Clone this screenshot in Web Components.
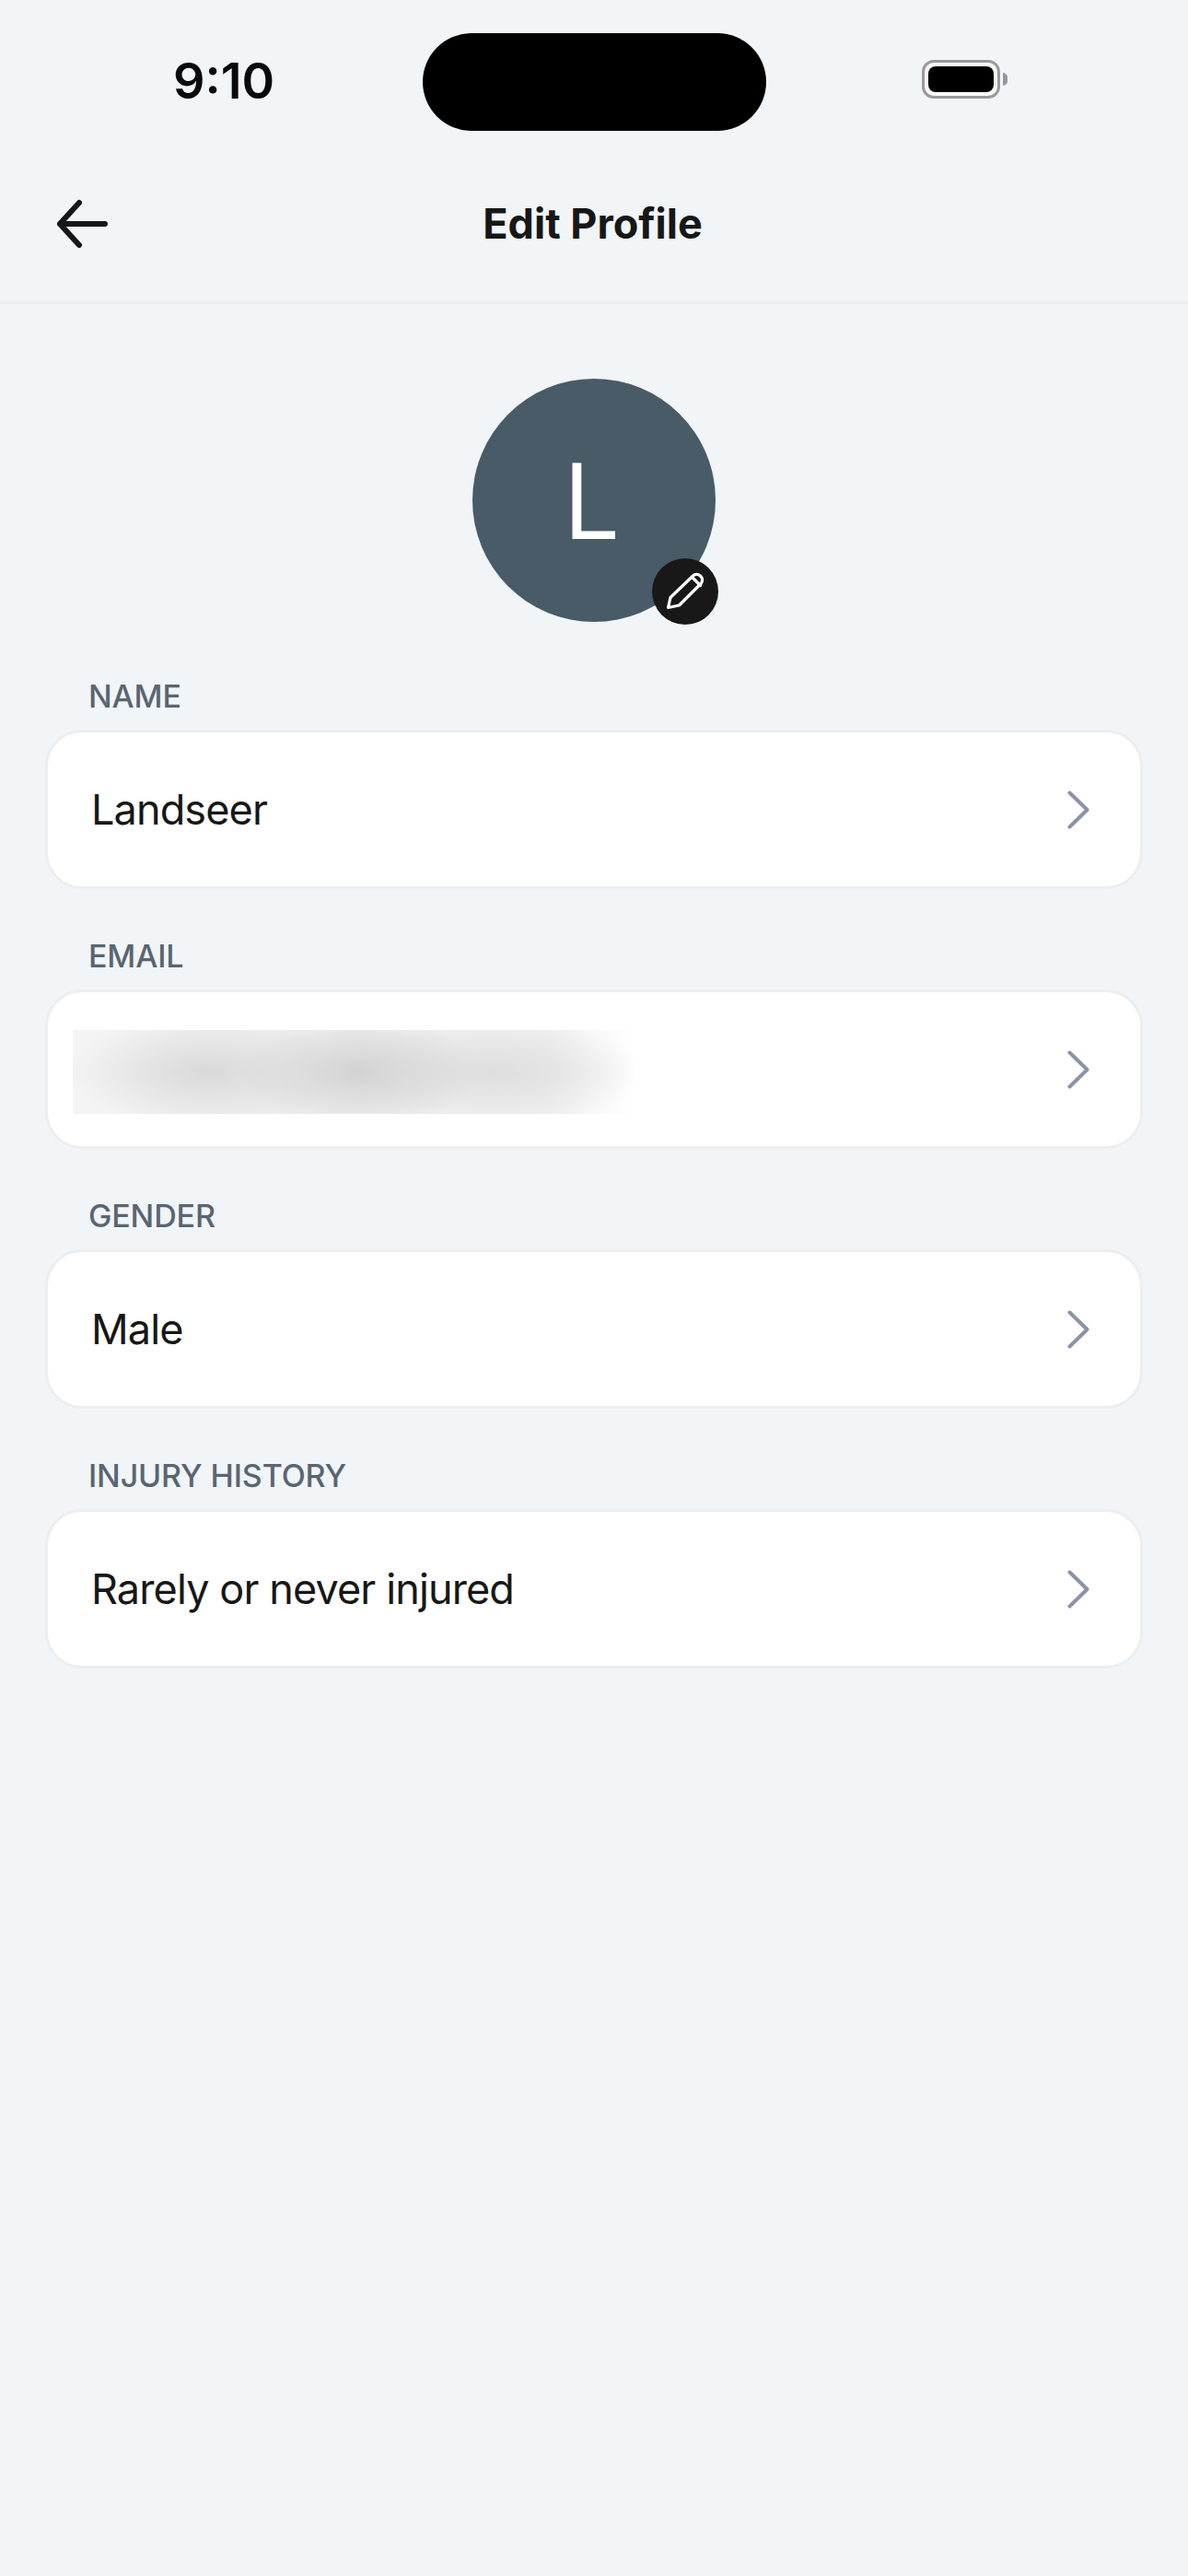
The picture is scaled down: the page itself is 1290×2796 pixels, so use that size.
<!DOCTYPE html>
<html lang="en"><head><meta charset="utf-8"><title>Edit Profile</title>
<style>
html,body{margin:0;padding:0;background:#f1f5f8;}
body{font-family:Inter,"Liberation Sans",sans-serif;color:#171717;min-height:2796px;}
main-page{display:block}
</style></head><body>
<main-page>
  <status-bar time="9:10"></status-bar>
  <nav-header>Edit Profile</nav-header>
  <profile-avatar initial="L"></profile-avatar>
  <field-list>
    <profile-field label="NAME">Landseer</profile-field>
    <profile-field label="EMAIL"><redacted-text></redacted-text></profile-field>
    <profile-field label="GENDER">Male</profile-field>
    <profile-field label="INJURY HISTORY">Rarely or never injured</profile-field>
  </field-list>
</main-page>
<script>
function def(name,html){
  customElements.define(name,class extends HTMLElement{
    connectedCallback(){
      if(this.shadowRoot)return;
      const r=this.attachShadow({mode:'open'});
      r.innerHTML=typeof html==='function'?html(this):html;
    }
  });
}
def('status-bar',h=>`<style>
:host{display:grid;grid-template-columns:1fr 373px 1fr;height:158px;padding-top:36px;box-sizing:border-box;align-items:start}
.time{font:600 54px/1 Inter,sans-serif;color:#0a0a0a;justify-self:start;margin:25px 0 0 188px}
.island{height:106px;border-radius:53px;background:#000}
.bat{justify-self:start;margin:29px 0 0 169px;display:flex;align-items:center;gap:3px}
.body{box-sizing:border-box;width:85px;height:42px;border:3px solid #9a9a9c;border-radius:13px;padding:4px;background:#f7f9fb}
.fill{height:100%;background:#000;border-radius:8px}
.cap{width:5px;height:14px;background:#98989a;border-radius:0 7px 7px 0}
</style><div class="time">${h.getAttribute('time')}</div><div class="island"></div>
<div class="bat"><div class="body"><div class="fill"></div></div><div class="cap"></div></div>`);
def('nav-header',`<style>
:host{display:grid;grid-template-columns:1fr auto 1fr;align-items:center;height:172px;box-sizing:border-box;border-bottom:3px solid #eceef0}
svg{display:block;margin-left:56px}
.t{font:700 45px/1 Inter,sans-serif;color:#171717;margin-right:3px}
</style><svg width="64" height="56" viewBox="0 0 64 56" fill="none" stroke="#171717" stroke-width="6" stroke-linecap="round" stroke-linejoin="round"><path d="M58 28H9M30 5 9 28l21 23"/></svg><div class="t"><slot></slot></div><div></div>`);
def('profile-avatar',h=>`<style>
:host{display:flex;justify-content:center;padding-top:81px}
.a{position:relative;box-sizing:border-box;width:264px;height:264px;padding:0 9px 7px 0;border-radius:50%;background:#485b67;color:#fff;display:flex;align-items:center;justify-content:center;font:400 116px/1 "Open Sans",sans-serif}
.b{position:absolute;left:195px;top:195px;width:72px;height:72px;border-radius:50%;background:#181818}
svg{display:block}
</style><div class="a">${h.getAttribute('initial')}<div class="b"><svg width="72" height="72" viewBox="0 0 72 72" fill="none" stroke="#fff" stroke-width="3.2" stroke-linejoin="round" stroke-linecap="round"><path d="M17.500 53.500l2.500-11L44.500 19a5.500 5.500 0 0 1 7.800 0l.7.700a5.500 5.500 0 0 1 0 7.800L29.500 51z"/><path d="M44 21l8.500 8.500"/></svg></div></div>`);
def('field-list',`<style>:host{display:flex;flex-direction:column;gap:53px;padding:61px 49px 0}</style><slot></slot>`);
def('profile-field',h=>`<style>
:host{display:block}
.l{font:500 34px/40px Inter,sans-serif;letter-spacing:-.15px;color:#5a6570;margin:0 0 16px 47px}
.c{box-sizing:border-box;height:173px;background:#fff;border:3px solid #eceef0;border-radius:40px;display:flex;align-items:center;justify-content:space-between;padding:0 55px 0 47px;font:400 45px/1 Inter,sans-serif;letter-spacing:-.88px;color:#171717}
svg{display:block;flex:none}
</style><div class="l">${h.getAttribute('label')}</div><div class="c"><div><slot></slot></div><svg width="24" height="42" viewBox="0 0 24 42" fill="none" stroke="#8b93a7" stroke-width="4" stroke-linecap="round" stroke-linejoin="round"><path d="M2.500 2.500 21.500 21 2.500 39.500"/></svg></div>`);
def('redacted-text',`<style>
:host{display:block;width:608px;height:91px;margin:5px 0 0 -20px;
background:radial-gradient(ellipse 130px 64px at 51% 50%,#d2d2d2,rgba(214,214,214,0)),radial-gradient(ellipse 150px 60px at 24% 50%,#d9d9d9,rgba(216,216,216,0)),radial-gradient(ellipse 170px 54px at 75% 50%,#dedede,rgba(222,222,222,0)),linear-gradient(90deg,#f4f4f4,#efefef 40%,#efefef 85%,#fff)}
</style>`);
</script>
</body></html>
